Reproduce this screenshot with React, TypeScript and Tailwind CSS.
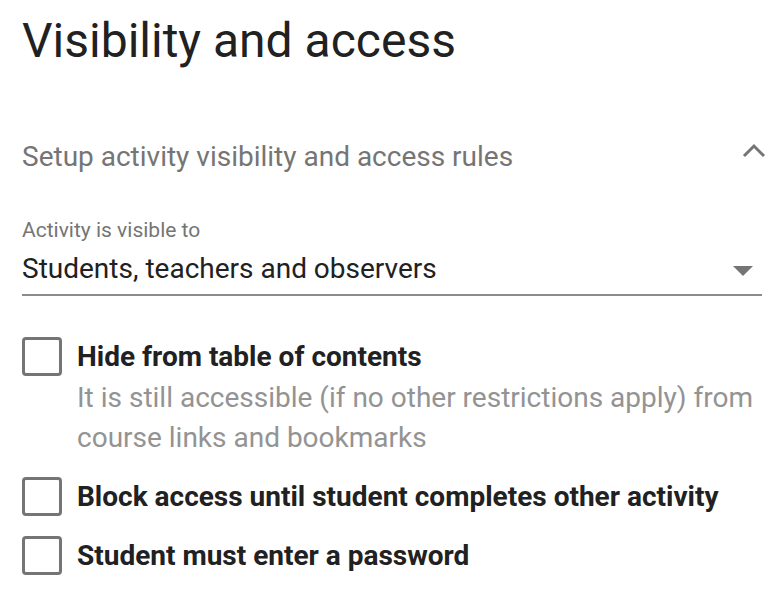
import { useState } from "react";

type Rule = {
  id: string;
  label: string;
  hint?: string;
};

const rules: Rule[] = [
  {
    id: "toc",
    label: "Hide from table of contents",
    hint: "It is still accessible (if no other restrictions apply) from course links and bookmarks",
  },
  { id: "block", label: "Block access until student completes other activity" },
  { id: "password", label: "Student must enter a password" },
];

function Checkbox({ checked, onToggle }: { checked: boolean; onToggle: () => void }) {
  return (
    <button
      type="button"
      onClick={onToggle}
      className={`h-[39px] w-[40px] shrink-0 rounded-[4px] border-[3.5px] border-[#757575] ${
        checked ? "bg-[#757575]" : "bg-white"
      }`}
    />
  );
}

export default function App() {
  const [checked, setChecked] = useState<Record<string, boolean>>({});

  return (
    <main className="min-h-screen bg-white pl-[22px] pr-[22px] font-['Roboto',sans-serif] text-[#212121]">
      <h1 className="pt-[13px] text-[48px] leading-[56px] font-normal">Visibility and access</h1>

      {/* collapsible section header */}
      <div className="mt-[72px] flex items-start justify-between">
        <p className="text-[28px] leading-[32px] text-[#757575]">
          Setup activity visibility and access rules
        </p>
        <svg width="24" height="16" viewBox="0 0 24 16" className="mr-[-4px] mt-[2px]">
          <path d="M2 13 L12 3 L22 13" fill="none" stroke="#757575" strokeWidth="3" />
        </svg>
      </div>

      <div className="mt-[45px]">
        <p className="text-[21px] leading-[24px] text-[#757575]">Activity is visible to</p>
        <div className="mt-[11px] flex items-start justify-between border-b-2 border-[#8c8c8c] pb-[9px]">
          <span className="text-[28px] leading-[32px]">Students, teachers and observers</span>
          <svg width="20" height="10" viewBox="0 0 20 10" className="mr-[9px] mt-[13px]">
            <path d="M0 0 L20 0 L10 10 Z" fill="#757575" />
          </svg>
        </div>
      </div>

      <div className="mt-[41px] flex flex-col gap-[19px]">
        {rules.map((rule) => (
          <div key={rule.id} className="flex items-start gap-[15px]">
            <Checkbox
              checked={!!checked[rule.id]}
              onToggle={() => setChecked((c) => ({ ...c, [rule.id]: !c[rule.id] }))}
            />
            <div>
              <p className="text-[28px] leading-[40px] font-bold text-[#212121]">{rule.label}</p>
              {rule.hint && (
                <p className="mt-[1px] text-[28px] leading-[40px] text-[#939393]">{rule.hint}</p>
              )}
            </div>
          </div>
        ))}
      </div>
    </main>
  );
}
